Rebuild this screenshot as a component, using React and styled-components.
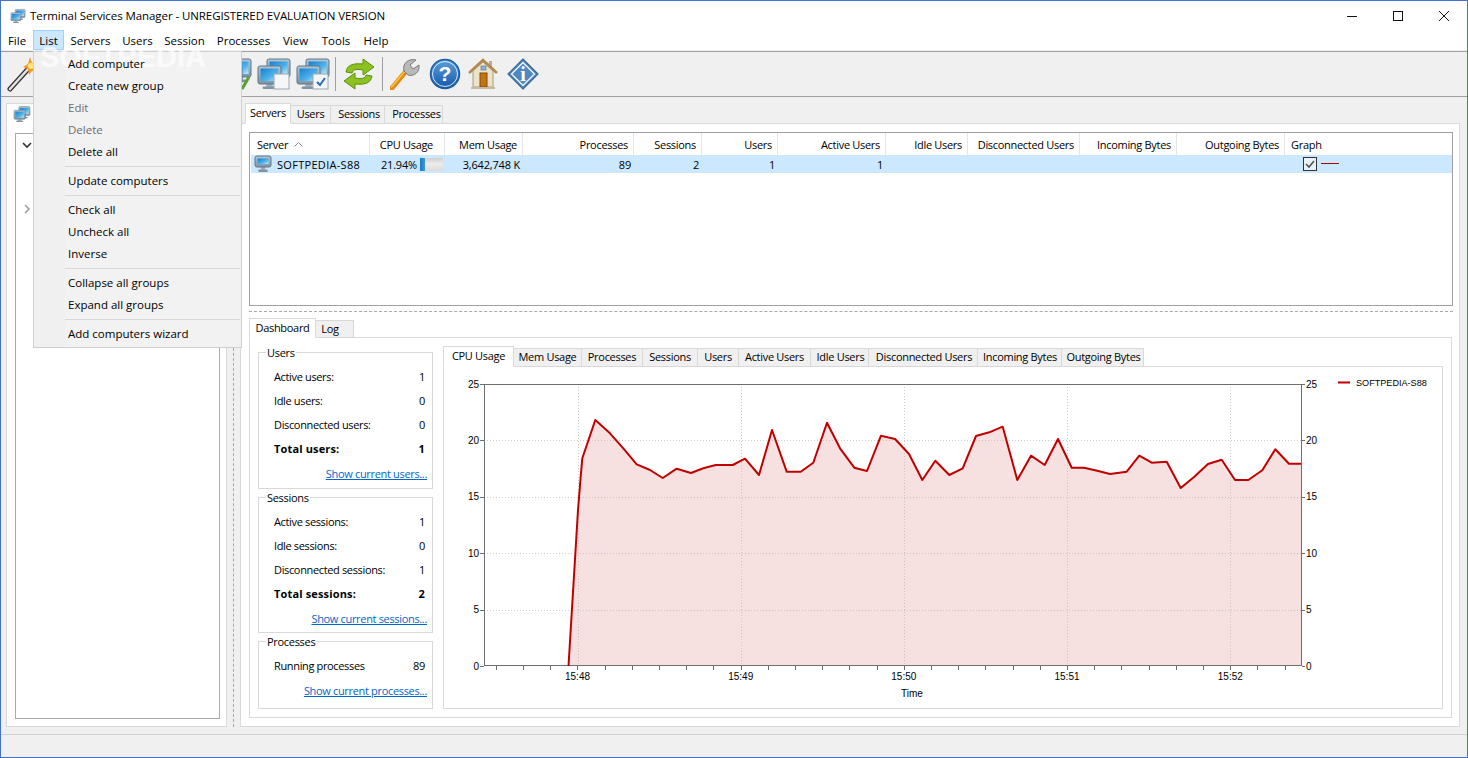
import React from 'react';
import styled, { createGlobalStyle } from 'styled-components';

const GlobalStyle = createGlobalStyle`
  html, body { margin: 0; padding: 0; background: #f0f0f0; }
  * { box-sizing: border-box; }
`;

const UI_FONT = '"Open Sans", "Noto Sans", sans-serif';

const Window = styled.div`
  position: relative;
  width: 1468px;
  height: 758px;
  overflow: hidden;
  display: flex;
  flex-direction: column;
  background: #f0f0f0;
  border: 1px solid #4472c4;
  font-family: ${UI_FONT};
  font-size: 11.5px;
  color: #000;
`;

const TitleBar = styled.div`
  height: 29px;
  flex: none;
  display: flex;
  align-items: center;
  background: #fff;
  padding-left: 9px;
`;

const TitleText = styled.span`
  margin-left: 4px;
  letter-spacing: -0.08px;
  flex: 1;
  white-space: nowrap;
`;

const WinButton = styled.div`
  width: 46px;
  height: 29px;
  display: flex;
  align-items: center;
  justify-content: center;
`;

const MenuBar = styled.div`
  height: 20px;
  flex: none;
  display: flex;
  background: #fff;
`;

const MenuBarItem = styled.div`
  height: 20px;
  width: ${p => p.$w}px;
  display: flex;
  align-items: center;
  justify-content: center;
  white-space: nowrap;
  border: 1px solid ${p => (p.$open ? '#99d1ff' : 'transparent')};
  background: ${p => (p.$open ? '#cce8ff' : 'transparent')};
`;

const Toolbar = styled.div`
  height: 46px;
  flex: none;
  margin-top: 1px;
  display: flex;
  align-items: center;
  padding: 0 0 0 6px;
  border-top: 1px solid #a0a0a0;
  border-bottom: 1px solid #a0a0a0;
`;

const ToolSlot = styled.div`
  width: 39px;
  height: 36px;
  flex: none;
  display: flex;
  align-items: center;
  svg { display: block; }
`;

const ToolGap = styled.div`
  width: 172px;
  flex: none;
`;

const ToolSep = styled.div`
  width: 1px;
  height: 34px;
  flex: none;
  background: #a0a0a0;
  margin: 0 7px 0 0;
`;

const Main = styled.div`
  flex: 1;
  min-height: 0;
  display: flex;
  padding: 6px 0 7px 5px;
`;

const LeftPanel = styled.div`
  width: 221px;
  flex: none;
  display: flex;
  flex-direction: column;
`;

const Splitter = styled.div`
  width: 13px;
  flex: none;
  margin-top: -6px;
  display: flex;
  justify-content: center;
  &::before {
    content: '';
    display: block;
    border-left: 1px dashed #a8a8a8;
    height: 100%;
  }
`;

const RightPanel = styled.div`
  width: 1220px;
  flex: none;
  display: flex;
  flex-direction: column;
`;

const TabStrip = styled.div`
  display: flex;
  align-items: flex-end;
  height: ${p => p.$h || 21}px;
  flex: none;
  padding-left: ${p => p.$inset || 0}px;
  position: relative;
  z-index: 1;
  margin-bottom: -1px;
`;

const Tab = styled.div`
  width: ${p => p.$w}px;
  height: ${p => (p.$active ? '100%' : 'calc(100% - 2px)')};
  flex: none;
  display: flex;
  align-items: center;
  justify-content: center;
  padding: 0 ${p => p.$pr || 0}px 2px ${p => p.$pl || 0}px;
  white-space: nowrap;
  background: ${p => (p.$active ? '#fff' : '#f0f0f0')};
  border: 1px solid #d9d9d9;
  border-bottom: ${p => (p.$active ? '1px solid #fff' : '1px solid #d9d9d9')};
  border-left: ${p => (p.$active ? '1px solid #d9d9d9' : 'none')};
  font-size: 11px;
  letter-spacing: -0.3px;
`;

const IconTab = styled(Tab)`
  justify-content: flex-start;
  padding: 0 0 0 6px;
`;

const TabPage = styled.div`
  flex: 1;
  min-height: 0;
  background: #fff;
  border: 1px solid #d9d9d9;
  display: flex;
  flex-direction: column;
  padding: ${p => p.$pad || 0};
`;

const TreeBox = styled.div`
  flex: 1;
  background: #fff;
  border: 1px solid #a9a9a9;
  display: flex;
  flex-direction: column;
  padding: 5px 0 0 5px;
  color: #555;
`;

const TreeToggle = styled.div`
  height: 16px;
  margin-bottom: ${p => p.$after || 0}px;
  svg { display: block; }
`;

const ListBox = styled.div`
  height: 174px;
  flex: none;
  margin-right: 6px;
  background: #fff;
  border: 1px solid #a0a0a0;
  padding-left: 1px;
`;

const gridColumns = '119px 75px 78px 111px 68px 76px 108px 82px 112px 97px 108px 165px';

const HeaderRow = styled.div`
  display: grid;
  grid-template-columns: ${gridColumns};
  height: 22px;
`;

const HeaderCell = styled.div`
  display: flex;
  align-items: center;
  justify-content: ${p => (p.$left ? 'flex-start' : 'flex-end')};
  padding: ${p => (p.$left ? '0 0 0 6px' : `0 ${p.$trail || 5}px 0 0`)};
  border-right: ${p => (p.$last ? 'none' : '1px solid #e5e5e5')};
  font-size: 11px;
  letter-spacing: -0.3px;
  white-space: nowrap;
`;

const SortArrow = styled.svg`
  margin-left: 6px;
  display: block;
`;

const DataRow = styled.div`
  display: grid;
  grid-template-columns: ${gridColumns};
  height: 18px;
  background: #cce8ff;
`;

const DataCell = styled.div`
  display: flex;
  align-items: center;
  justify-content: ${p => (p.$left ? 'flex-start' : 'flex-end')};
  padding: ${p => (p.$left ? '0 0 0 3px' : '0 3px 0 0')};
  font-size: 11px;
  letter-spacing: -0.18px;
  white-space: nowrap;
`;

const UsageCell = styled(DataCell)`
  padding-right: 2px;
`;

const ServerName = styled.span`
  margin-left: 5px;
  letter-spacing: 0.3px;
`;

const UsageBar = styled.div`
  width: 23px;
  height: 13px;
  margin-left: 3px;
  background: linear-gradient(#cfcfcf, #ececec 45%, #dcdcdc);
  flex: none;
`;

const UsageFill = styled.div`
  height: 100%;
  background: linear-gradient(90deg, #1c7cc0, #3b9ad8);
`;

const GraphCell = styled(DataCell)`
  justify-content: flex-start;
  padding-left: 18px;
`;

const CheckMark = styled.div`
  width: 14px;
  height: 14px;
  border: 1px solid #333;
  background: #e8f2fa;
  display: flex;
  align-items: center;
  justify-content: center;
`;

const SeriesLine = styled.div`
  width: 18px;
  height: 1px;
  margin: 0 0 1px 4px;
  background: #a80000;
`;

const HSplit = styled.div`
  height: 12px;
  flex: none;
  margin-right: 6px;
  padding-top: 5px;
  &::before {
    content: '';
    display: block;
    border-top: 1px dashed #a8a8a8;
  }
`;

const DashboardArea = styled.div`
  flex: 1;
  min-height: 0;
  display: flex;
  flex-direction: column;
  margin-right: 7px;
`;

const DashboardBody = styled.div`
  flex: 1;
  min-height: 0;
  background: #fff;
  border: 1px solid #d9d9d9;
  display: flex;
  gap: 10px;
  padding: 8px;
`;

const StatsColumn = styled.div`
  width: 175px;
  flex: none;
  margin-top: 6px;
  display: flex;
  flex-direction: column;
  gap: 8px;
`;

const GroupBox = styled.div`
  position: relative;
  height: ${p => p.$h}px;
  flex: none;
  border: 1px solid #d9d9d9;
  padding: 12px 0 0 15px;
`;

const GroupLegend = styled.span`
  position: absolute;
  top: -8px;
  left: 7px;
  padding: 0 1px;
  background: #fff;
  line-height: 15px;
  font-size: 11px;
  letter-spacing: -0.3px;
`;

const StatRow = styled.div`
  height: 24px;
  display: flex;
  align-items: center;
  justify-content: space-between;
  padding: 0 7px 2px 0;
  font-weight: ${p => (p.$bold ? 700 : 400)};
  font-size: 11px;
  letter-spacing: ${p => (p.$bold ? '0.15px' : '-0.35px')};
`;

const LinkRow = styled.div`
  height: 24px;
  display: flex;
  align-items: center;
  justify-content: flex-end;
  padding-right: 5px;
  color: #0066cc;
  text-decoration: underline;
  font-size: 11px;
  letter-spacing: -0.33px;
`;

const ChartColumn = styled.div`
  flex: 1;
  min-width: 0;
  display: flex;
  flex-direction: column;
`;

const ChartPage = styled.div`
  flex: 1;
  min-height: 0;
  background: #fff;
  border: 1px solid #d9d9d9;
  svg { display: block; }
`;

const StatusBar = styled.div`
  height: 23px;
  flex: none;
  border-top: 1px solid #d0d0d0;
`;

const DropMenu = styled.div`
  position: absolute;
  left: 32px;
  top: 50px;
  z-index: 5;
  width: 209px;
  padding: 1px 1px 2px;
  background: linear-gradient(90deg, #f0f0f0 31px, #f2f2f2 31px);
  border: 1px solid #cfcfcf;
`;

const DropItem = styled.div`
  position: relative;
  z-index: 2;
  height: 22px;
  display: flex;
  align-items: center;
  padding: 0 0 2px 33px;
  color: ${p => (p.$disabled ? '#6d6d6d' : '#000')};
`;

const DropSep = styled.div`
  height: 7px;
  padding: 3px 0 3px 30px;
  &::before {
    content: '';
    display: block;
    height: 1px;
    background: #d7d7d7;
  }
`;

const Watermark = styled.div`
  position: absolute;
  left: 6px;
  top: -11px;
  z-index: 1;
  font-family: "Liberation Sans", sans-serif;
  font-weight: 700;
  font-size: 29px;
  color: rgba(255, 255, 255, 0.7);
  pointer-events: none;
`;

const ScreenGradient = () => (
  <defs>
    <linearGradient id="scr" x1="0" y1="0" x2="1" y2="1">
      <stop offset="0" stopColor="#1680d2" />
      <stop offset="0.6" stopColor="#4eb2ea" />
      <stop offset="1" stopColor="#c2ecfa" />
    </linearGradient>
    <linearGradient id="bez" x1="0" y1="0" x2="0" y2="1">
      <stop offset="0" stopColor="#b7c6d2" />
      <stop offset="1" stopColor="#7e95a6" />
    </linearGradient>
  </defs>
);

const Monitor = ({ x, y, w, h }) => (
  <g>
    <rect x={x + w * 0.36} y={y + h} width={w * 0.28} height={3} fill="#9fb0bd" />
    <rect x={x + w * 0.2} y={y + h + 2.5} width={w * 0.6} height={2.5} rx="1" fill="#7f95a5" />
    <rect x={x} y={y} width={w} height={h} rx="2" fill="url(#bez)" stroke="#5f7788" />
    <rect x={x + 2.5} y={y + 2.5} width={w - 5} height={h - 5.5} fill="url(#scr)" />
  </g>
);

const TwoMonitorIcon = ({ children }) => (
  <svg width="34" height="34" viewBox="0 0 34 34">
    <ScreenGradient />
    <Monitor x={10} y={2} w={23} h={18} />
    <Monitor x={1} y={9} w={23} h={18} />
    {children}
  </svg>
);

const WandIcon = () => (
  <svg width="32" height="36" viewBox="0 0 32 36">
    <path d="M3 33 L22 12" stroke="#333" strokeWidth="5" strokeLinecap="round" />
    <path d="M3 33 L22 12" stroke="#e2e2e2" strokeWidth="2.6" strokeLinecap="round" />
    <path d="M23 1 L25 7 L31 6 L27 11 L31 16 L25 15 L22 19 L21 13 L16 11 L21 8 Z" fill="#f59a1d" />
    <circle cx="24" cy="10" r="3" fill="#ffe680" />
  </svg>
);

const RefreshIcon = () => (
  <svg width="32" height="32" viewBox="0 0 32 32">
    <path d="M3 14 C4 7 10 5 20 6 L20 1 L31 9 L20 17 L20 12 C14 11 10 11 9 15 Z" fill="#8cc21f" stroke="#5c8f10" strokeWidth="1" />
    <path d="M29 18 C28 25 22 27 12 26 L12 31 L1 23 L12 15 L12 20 C18 21 22 21 23 17 Z" fill="#8cc21f" stroke="#5c8f10" strokeWidth="1" />
  </svg>
);

const WrenchIcon = () => (
  <svg width="30" height="32" viewBox="0 0 30 32">
    <path d="M2 30 L17 12" stroke="#e08a10" strokeWidth="5" strokeLinecap="round" />
    <path d="M1.6 29 L16 12" stroke="#ffc04a" strokeWidth="1.6" strokeLinecap="round" />
    <path d="M14 13 C12 6 18 0 26 2 L20 7 L23 11 L29 7 C30 14 24 19 18 17 Z" fill="#b9b9b9" stroke="#7c7c7c" />
  </svg>
);

const HelpIcon = () => (
  <svg width="32" height="32" viewBox="0 0 32 32">
    <defs>
      <linearGradient id="hlp" x1="0" y1="0" x2="0" y2="1">
        <stop offset="0" stopColor="#5ba0dc" />
        <stop offset="1" stopColor="#1558a8" />
      </linearGradient>
    </defs>
    <circle cx="16" cy="16" r="14.5" fill="url(#hlp)" stroke="#1c5ca6" strokeWidth="1.5" />
    <circle cx="16" cy="16" r="12.5" fill="none" stroke="#d6e8f6" strokeWidth="1" />
    <text x="16" y="23" textAnchor="middle" fontFamily="Liberation Sans" fontWeight="700" fontSize="21" fill="#fff">?</text>
  </svg>
);

const HomeIcon = () => (
  <svg width="30" height="32" viewBox="0 0 30 32">
    <rect x="21" y="3" width="3" height="9" fill="#b5b09a" />
    <path d="M5 13 L15 4 L25 13 L25 29 L5 29 Z" fill="#ece4c8" stroke="#a89c7a" />
    <path d="M1 15 L15 2 L29 15" fill="none" stroke="#b08a50" strokeWidth="2.5" />
    <rect x="12" y="15" width="7" height="14" fill="#c8720f" stroke="#7e4a10" />
    <rect x="13" y="8" width="5" height="4" fill="#8ab4dc" stroke="#5c6c80" strokeWidth="0.6" />
    <rect x="3" y="29" width="24" height="2" fill="#c4bc9c" />
  </svg>
);

const InfoIcon = () => (
  <svg width="32" height="32" viewBox="0 0 32 32">
    <path d="M16 1 L31 16 L16 31 L1 16 Z" fill="#4f82b4" stroke="#3e6c9a" strokeWidth="1.2" strokeLinejoin="round" />
    <path d="M16 4.5 L27.5 16 L16 27.5 L4.5 16 Z" fill="#4f88c0" stroke="#e8f0f8" strokeWidth="1.5" />
    <text x="16" y="23" textAnchor="middle" fontFamily="Liberation Serif" fontWeight="700" fontSize="20" fill="#fff">i</text>
  </svg>
);

const DocBadge = ({ check }) => (
  <g>
    <rect x="17" y="17" width="15" height="15" fill="#f4f6f8" stroke="#9aa8b4" />
    {check && <path d="M21 25 L24 28 L29 21" fill="none" stroke="#2c6cb0" strokeWidth="2" />}
  </g>
);

const MinimizeGlyph = () => (
  <svg width="10" height="10" viewBox="0 0 10 10"><path d="M0 5.5 H10" stroke="#111" /></svg>
);
const MaximizeGlyph = () => (
  <svg width="10" height="10" viewBox="0 0 10 10"><rect x="0.5" y="0.5" width="9" height="9" fill="none" stroke="#111" /></svg>
);
const CloseGlyph = () => (
  <svg width="10" height="10" viewBox="0 0 10 10"><path d="M0 0 L10 10 M10 0 L0 10" stroke="#111" /></svg>
);

const SmallMonitors = ({ size }) => (
  <svg width={size} height={size} viewBox="0 0 34 34">
    <ScreenGradient />
    <Monitor x={11} y={3} w={21} h={17} />
    <Monitor x={2} y={10} w={21} h={17} />
  </svg>
);

const ServerIcon = () => (
  <svg width="18" height="18" viewBox="0 0 18 18">
    <ScreenGradient />
    <Monitor x={1} y={1} w={16} h={11} />
  </svg>
);

const Chevron = ({ open }) => (
  <svg width="12" height="12" viewBox="0 0 12 12">
    {open
      ? <path d="M2 4 L6 8 L10 4" fill="none" stroke="#333" strokeWidth="1.6" />
      : <path d="M4 2 L8 6 L4 10" fill="none" stroke="#a0a0a0" strokeWidth="1.6" />}
  </svg>
);

const menuBarItems = [
  ['File', 32], ['List', 31], ['Servers', 53], ['Users', 41], ['Session', 53],
  ['Processes', 65], ['View', 39], ['Tools', 42], ['Help', 38],
];

const dropItems = [
  { label: 'Add computer' }, { label: 'Create new group' }, { label: 'Edit', disabled: true },
  { label: 'Delete', disabled: true }, { label: 'Delete all' }, { sep: true },
  { label: 'Update computers' }, { sep: true },
  { label: 'Check all' }, { label: 'Uncheck all' }, { label: 'Inverse' }, { sep: true },
  { label: 'Collapse all groups' }, { label: 'Expand all groups' }, { sep: true },
  { label: 'Add computers wizard' },
];

const serverTabs = [['Servers', 46, 0], ['Users', 40, 0], ['Sessions', 54, 3], ['Processes', 58, 6]];
const chartTabs = [
  ['CPU Usage', 71, 0], ['Mem Usage', 68, 0], ['Processes', 61, 0], ['Sessions', 55, 0], ['Users', 41, 0],
  ['Active Users', 72, 0], ['Idle Users', 58, 2], ['Disconnected Users', 109, 2], ['Incoming Bytes', 84, 1], ['Outgoing Bytes', 82, 2],
];

const headers = ['Server', 'CPU Usage', 'Mem Usage', 'Processes', 'Sessions', 'Users', 'Active Users', 'Idle Users', 'Disconnected Users', 'Incoming Bytes', 'Outgoing Bytes', 'Graph'];

const groups = [
  {
    title: 'Users', h: 137, link: 'Show current users...',
    rows: [['Active users:', 1], ['Idle users:', 0], ['Disconnected users:', 0], ['Total users:', 1, true]],
  },
  {
    title: 'Sessions', h: 136, link: 'Show current sessions...',
    rows: [['Active sessions:', 1], ['Idle sessions:', 0], ['Disconnected sessions:', 1], ['Total sessions:', 2, true]],
  },
  {
    title: 'Processes', h: 68, link: 'Show current processes...',
    rows: [['Running processes', 89]],
  },
];

const cpuPoints = [
  [568.5, 666], [578, 510], [581, 473], [582.3, 458.3], [595.3, 420], [610, 433.3], [623.3, 448.3],
  [636.7, 464.3], [650, 470], [662.7, 478], [676.7, 468.7], [691, 473], [703.3, 468.3],
  [715.7, 465], [732.7, 465], [745, 458.7], [759, 475], [772, 430], [786.7, 471.7],
  [800.7, 471.7], [813.3, 462.7], [827, 422.7], [840, 448.3], [854.3, 467.7], [867, 471],
  [881, 435.7], [895, 439], [909, 454], [922.3, 480], [935.3, 460.7], [949.3, 475],
  [962.7, 468.3], [976, 436], [989.3, 432.3], [1002.7, 426.7], [1017.3, 480], [1031, 455.7],
  [1044.7, 465], [1058, 439], [1071.7, 467.7], [1084, 467.7], [1098.3, 471], [1110, 474],
  [1126.7, 471.7], [1139.3, 455.7], [1151.7, 462.7], [1166.7, 461.7], [1180.7, 488],
  [1194.3, 476.7], [1208, 464], [1221.7, 459.7], [1235, 480], [1248.3, 480], [1262.3, 470.3],
  [1275.3, 449.3], [1289, 463.7], [1301, 463.7],
];

const yLevels = [[25, 384], [20, 440.4], [15, 496.8], [10, 553.2], [5, 609.6], [0, 666]];
const xLabels = [['15:48', 577.5], ['15:49', 740.7], ['15:50', 903.8], ['15:51', 1067], ['15:52', 1230.3]];
const minorTicks = Array.from({ length: 30 }, (_, i) => 495.7 + i * 27.2);

const CpuChart = () => {
  const line = cpuPoints.map(p => p.join(',')).join(' ');
  const area = `568.5,666 ${line} 1301,666`;
  return (
    <svg width="998" height="342" viewBox="444 367 998 342" fontFamily="Liberation Sans, sans-serif" fontSize="10" fill="#000">
      <polygon points={area} fill="#f6e0e0" />
      {yLevels.slice(1, 5).map(([v, y]) => (
        <path key={v} d={`M484 ${Math.round(y) + 0.5} H1302`} stroke="#b8b8b8" strokeDasharray="1 2" opacity="0.7" />
      ))}
      {xLabels.map(([t, x]) => (
        <path key={t} d={`M${Math.round(x) + 0.5} 384 V666`} stroke="#b8b8b8" strokeDasharray="1 2" opacity="0.7" />
      ))}
      <rect x="484.5" y="384.5" width="817" height="281" fill="none" stroke="#6e6e6e" />
      <polyline points={line} fill="none" stroke="#c00000" strokeWidth="2" strokeLinejoin="round" />
      {yLevels.map(([v, y]) => (
        <g key={v}>
          <path d={`M480 ${Math.round(y) + 0.5} H484 M1302 ${Math.round(y) + 0.5} H1305`} stroke="#6e6e6e" />
          <text x="479" y={y + 3.5} textAnchor="end">{v}</text>
          <text x="1306" y={y + 3.5}>{v}</text>
        </g>
      ))}
      {minorTicks.map(x => (
        <path key={x} d={`M${Math.round(x) + 0.5} 666 V670`} stroke="#6e6e6e" />
      ))}
      {xLabels.map(([t, x]) => (
        <text key={t} x={x} y="680" textAnchor="middle">{t}</text>
      ))}
      <text x="912" y="697" textAnchor="middle">Time</text>
      <path d="M1338 382.5 H1350" stroke="#c00000" strokeWidth="2" />
      <text x="1356" y="385.5" fontSize="9.1">SOFTPEDIA-S88</text>
    </svg>
  );
};

const App = () => (
  <>
    <GlobalStyle />
    <Window>
      <TitleBar>
        <SmallMonitors size={16} />
        <TitleText>Terminal Services Manager - UNREGISTERED EVALUATION VERSION</TitleText>
        <WinButton><MinimizeGlyph /></WinButton>
        <WinButton><MaximizeGlyph /></WinButton>
        <WinButton><CloseGlyph /></WinButton>
      </TitleBar>
      <MenuBar>
        {menuBarItems.map(([label, w]) => (
          <MenuBarItem key={label} $w={w} $open={label === 'List'}>{label}</MenuBarItem>
        ))}
      </MenuBar>
      <Toolbar>
        <ToolSlot><WandIcon /></ToolSlot>
        <ToolGap />
        <ToolSlot>
          <TwoMonitorIcon><path d="M24 32 L31 20" stroke="#5aa02c" strokeWidth="3" /></TwoMonitorIcon>
        </ToolSlot>
        <ToolSlot><TwoMonitorIcon><DocBadge /></TwoMonitorIcon></ToolSlot>
        <ToolSlot><TwoMonitorIcon><DocBadge check /></TwoMonitorIcon></ToolSlot>
        <ToolSep />
        <ToolSlot><RefreshIcon /></ToolSlot>
        <ToolSep />
        <ToolSlot><WrenchIcon /></ToolSlot>
        <ToolSlot><HelpIcon /></ToolSlot>
        <ToolSlot><HomeIcon /></ToolSlot>
        <ToolSlot><InfoIcon /></ToolSlot>
      </Toolbar>
      <Main>
        <LeftPanel>
          <TabStrip>
            <IconTab $w={60} $active><SmallMonitors size={18} /></IconTab>
          </TabStrip>
          <TabPage $pad="9px 6px 7px 8px">
            <TreeBox>
              <TreeToggle $after={48}><Chevron open /></TreeToggle>
              <TreeToggle><Chevron /></TreeToggle>
            </TreeBox>
          </TabPage>
        </LeftPanel>
        <Splitter />
        <RightPanel>
          <TabStrip $inset={5}>
            {serverTabs.map(([label, w, pl], i) => (
              <Tab key={label} $w={w} $pl={pl} $active={i === 0}>{label}</Tab>
            ))}
          </TabStrip>
          <TabPage $pad="8px 0 8px 8px">
            <ListBox>
              <HeaderRow>
                {headers.map((h, i) => (
                  <HeaderCell key={h} $left={i === 0 || i === 11} $last={i === 11} $trail={i === 1 ? 11 : 5}>
                    {h}
                    {i === 0 && (
                      <SortArrow width="9" height="5" viewBox="0 0 9 5">
                        <path d="M0.5 4.5 L4.5 0.5 L8.5 4.5" fill="none" stroke="#888" />
                      </SortArrow>
                    )}
                  </HeaderCell>
                ))}
              </HeaderRow>
              <DataRow>
                <DataCell $left><ServerIcon /><ServerName>SOFTPEDIA-S88</ServerName></DataCell>
                <UsageCell>21.94%<UsageBar><UsageFill style={{ width: '22%' }} /></UsageBar></UsageCell>
                <DataCell>3,642,748 K</DataCell>
                <DataCell>89</DataCell>
                <DataCell>2</DataCell>
                <DataCell>1</DataCell>
                <DataCell>1</DataCell>
                <DataCell /><DataCell /><DataCell /><DataCell />
                <GraphCell>
                  <CheckMark>
                    <svg width="12" height="12" viewBox="0 0 12 12"><path d="M2 6 L5 9 L10 3" fill="none" stroke="#555" strokeWidth="1.6" /></svg>
                  </CheckMark>
                  <SeriesLine />
                </GraphCell>
              </DataRow>
            </ListBox>
            <HSplit />
            <DashboardArea>
              <TabStrip $h={20}>
                <Tab $w={67} $active>Dashboard</Tab>
                <Tab $w={38} $pr={9}>Log</Tab>
              </TabStrip>
              <DashboardBody>
                <StatsColumn>
                  {groups.map(g => (
                    <GroupBox key={g.title} $h={g.h}>
                      <GroupLegend>{g.title}</GroupLegend>
                      {g.rows.map(([label, value, bold]) => (
                        <StatRow key={label} $bold={bold}><span>{label}</span><span>{value}</span></StatRow>
                      ))}
                      <LinkRow>{g.link}</LinkRow>
                    </GroupBox>
                  ))}
                </StatsColumn>
                <ChartColumn>
                  <TabStrip>
                    {chartTabs.map(([label, w, pl], i) => (
                      <Tab key={label} $w={w} $pl={pl} $active={i === 0}>{label}</Tab>
                    ))}
                  </TabStrip>
                  <ChartPage><CpuChart /></ChartPage>
                </ChartColumn>
              </DashboardBody>
            </DashboardArea>
          </TabPage>
        </RightPanel>
      </Main>
      <StatusBar />
      <DropMenu>
        {dropItems.map((item, i) => (
          item.sep
            ? <DropSep key={i} />
            : <DropItem key={item.label} $disabled={item.disabled}>{item.label}</DropItem>
        ))}
        <Watermark>SOFTPEDIA</Watermark>
      </DropMenu>
    </Window>
  </>
);

export default App;
